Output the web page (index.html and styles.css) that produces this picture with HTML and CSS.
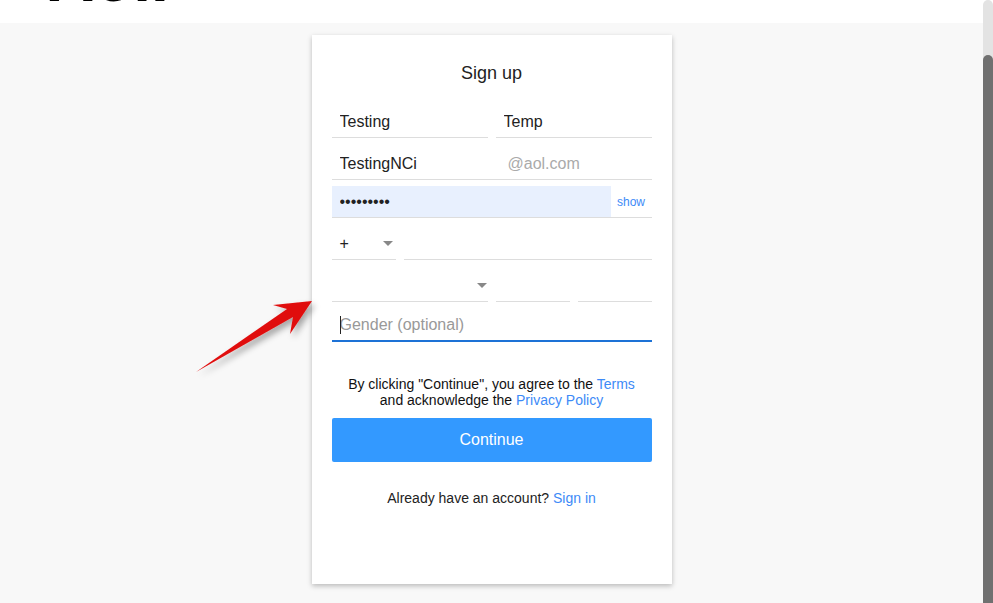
FILE: index.html
```html
<!DOCTYPE html>
<html lang="en">
<head>
    <meta charset="UTF-8">
    <meta name="viewport" content="width=device-width, initial-scale=1.0">
    <title>Sign up</title>
    <link rel="stylesheet" href="styles.css">
</head>
<body>

<div class="page">
    <header class="topbar">
        <div class="logo">Aol.</div>
    </header>

    <main class="main">
        <form class="card">
            <h2 class="title">Sign up</h2>

            <div class="row row-name">
                <div class="field"><input type="text" value="Testing"></div>
                <div class="field"><input type="text" value="Temp"></div>
            </div>

            <div class="row row-email">
                <div class="field field-email">
                    <input type="text" value="TestingNCi">
                    <span class="domain">@aol.com</span>
                </div>
            </div>

            <div class="row row-pass">
                <div class="field field-pass">
                    <input type="password" value="123456789">
                    <a href="#" class="show">show</a>
                </div>
            </div>

            <div class="row row-phone">
                <div class="field select"><span class="value">+</span><span class="caret"></span></div>
                <div class="field"><input type="tel"></div>
            </div>

            <div class="row row-birth">
                <div class="field select select-month"><span class="value"></span><span class="caret"></span></div>
                <div class="field"><input type="text"></div>
                <div class="field"><input type="text"></div>
            </div>

            <div class="row row-gender">
                <div class="field field-focus">
                    <span class="cursor"></span>
                    <input type="text" placeholder="Gender (optional)">
                </div>
            </div>

            <p class="terms">By clicking "Continue", you agree to the <a href="#">Terms</a><br>and acknowledge the <a href="#">Privacy Policy</a></p>

            <button type="button" class="continue">Continue</button>

            <p class="signin">Already have an account? <a href="#">Sign in</a></p>
        </form>
    </main>

    <!-- Red annotation arrow -->
    <svg class="arrow" width="140" height="100" viewBox="190 290 140 100">
        <defs>
            <filter id="shadow" x="-30%" y="-30%" width="160%" height="160%">
                <feDropShadow dx="3" dy="4" stdDeviation="3" flood-color="#000" flood-opacity="0.35"/>
            </filter>
        </defs>
        <polygon filter="url(#shadow)" fill="#e00d0d"
                 points="196,372 287,309 273,305 312,301 290,334 293,317"/>
    </svg>
</div>

<div class="scrollbar">
    <div class="thumb"></div>
</div>

</body>
</html>
```

FILE: styles.css
```css
* {
    box-sizing: border-box;
}
body {
    margin: 0;
    padding: 0;
    height: 603px;
    overflow: hidden;
    display: flex;
    font-family: 'Liberation Sans', Arial, sans-serif;
    color: #222;
    background-color: #f8f8f8;
}
.page {
    flex: 1;
    position: relative;
    display: flex;
    flex-direction: column;
}
.topbar {
    height: 23px;
    background-color: #fff;
    overflow: hidden;
}
.logo {
    margin-top: -53px;
    padding-left: 48px;
    font-size: 64px;
    line-height: 64px;
    font-weight: bold;
    color: #000;
}
.main {
    flex: 1;
    display: flex;
    justify-content: center;
    padding-top: 12px;
}
.card {
    width: 360px;
    height: 549px;
    padding: 26px 20px 0;
    background-color: #fff;
    box-shadow: 0 2px 5px rgba(0, 0, 0, 0.25);
    display: flex;
    flex-direction: column;
}
.title {
    margin: 0;
    font-size: 18px;
    line-height: 24px;
    font-weight: normal;
    text-align: center;
    color: #222;
}

/* Form rows */
.row {
    display: grid;
    grid-template-columns: minmax(0, 1fr);
    column-gap: 8px;
}
.row-name {
    grid-template-columns: minmax(0, 1fr) minmax(0, 1fr);
    margin-top: 21px;
}
.row-email { margin-top: 10px; }
.row-pass { margin-top: 6px; }
.row-phone {
    grid-template-columns: 64px minmax(0, 1fr);
    margin-top: 10px;
}
.row-birth {
    grid-template-columns: 156px minmax(0, 1fr) minmax(0, 1fr);
    margin-top: 10px;
}
.row-gender { margin-top: 8px; }

.field {
    position: relative;
    display: flex;
    align-items: center;
    min-width: 0;
    height: 32px;
    border-bottom: 1px solid #ddd;
}
.field input {
    flex: 1;
    width: 100%;
    min-width: 0;
    height: 100%;
    padding: 0 8px;
    border: none;
    outline: none;
    background: transparent;
    font-family: inherit;
    font-size: 16px;
    color: #222;
}
.field input::placeholder {
    color: #999;
}
.field-email input {
    flex: 0 0 164px;
}
.domain {
    padding-left: 12px;
    font-size: 16px;
    color: #aaa;
}
.field-pass input {
    background-color: #e8f0fe;
    font-size: 16px;
}
.show {
    width: 41px;
    text-align: center;
    font-size: 12px;
    color: #3d8af7;
    text-decoration: none;
}
.select {
    justify-content: space-between;
    padding: 0 3px 0 8px;
}
.select-month {
    padding-right: 1px;
}
.select .value {
    font-size: 16px;
}
.caret {
    width: 0;
    height: 0;
    border-left: 5px solid transparent;
    border-right: 5px solid transparent;
    border-top: 5px solid #888;
}
.field-focus {
    border-bottom: 2px solid #1d72d6;
}
.cursor {
    position: absolute;
    left: 8px;
    top: 6px;
    width: 1px;
    height: 18px;
    background-color: #222;
}

/* Bottom */
.terms {
    margin: 34px 0 0;
    font-size: 14px;
    line-height: 16px;
    text-align: center;
    color: #111;
}
.terms a,
.signin a {
    color: #3d8af7;
    text-decoration: none;
}
.continue {
    margin-top: 10px;
    height: 44px;
    border: none;
    border-radius: 2px;
    background-color: #3399ff;
    color: #fff;
    font-family: inherit;
    font-size: 16px;
    cursor: pointer;
}
.signin {
    margin: 28px 0 0;
    font-size: 14px;
    line-height: 16px;
    text-align: center;
    color: #222;
}

/* Annotation */
.arrow {
    position: absolute;
    left: 190px;
    top: 290px;
}

/* Fake scrollbar */
.scrollbar {
    width: 10px;
    display: flex;
    flex-direction: column;
    background-color: #fff;
}
.thumb {
    flex: 1;
    margin-top: 55px;
    border-radius: 5px 5px 0 0;
    background-color: #707070;
    box-shadow: 0 -55px 0 0 #e3e3e3;
}
```
